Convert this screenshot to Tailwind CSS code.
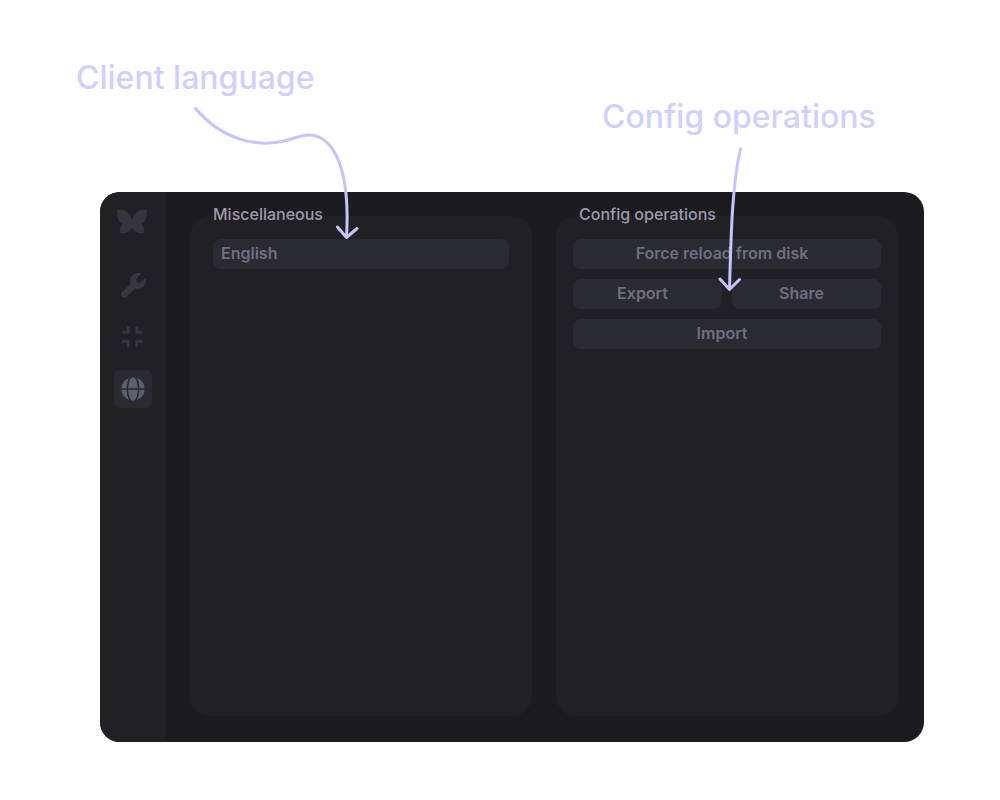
<!DOCTYPE html>
<html lang="en">
<head>
<meta charset="utf-8">
<meta name="viewport" content="width=device-width, initial-scale=1">
<title>Client settings</title>
<script src="https://cdn.jsdelivr.net/npm/@tailwindcss/browser@4"></script>
</head>
<body class="bg-white font-['Inter',sans-serif]">
<div class="relative flex min-h-screen flex-col pr-19 pb-[58px] pl-25">
  <header class="-ml-6 grid h-48 grid-cols-2 items-start gap-x-[204px] text-[32px] leading-10 font-medium text-[#d0d0ff]">
    <p class="pt-[58px] whitespace-nowrap">Client language</p>
    <p class="pt-[97px] whitespace-nowrap">Config operations</p>
  </header>

  <main class="flex flex-1 overflow-hidden rounded-[20px] bg-[#1c1b1f]">
    <nav aria-label="Sections" class="flex w-[66px] shrink-0 flex-col items-center bg-[#212025] pt-3">
      <svg class="h-9 w-9" viewBox="0 0 36 36" fill="#34353e" aria-label="Logo" role="img">
        <path d="M2.200 6C9 4.800 15.500 9 16.500 15.300H17.500C18.500 9 25 4.800 31.800 6C32.600 13 30.500 18 26.300 19.700C28.800 21.500 29.500 25.500 28.700 29C24 29.800 19.300 28.500 18.100 24.500H15.900C14.700 28.500 10 29.800 5.300 29C4.500 25.500 5.200 21.500 7.700 19.700C3.500 18 1.400 13 2.200 6Z"/>
      </svg>
      <div class="mt-[26px] flex flex-col gap-3.5">
        <button type="button" aria-label="Tools" class="flex h-[38px] w-[38px] items-center justify-center rounded-md">
          <svg class="h-[25px] w-[25px]" viewBox="0 0 512 512" fill="#363741"><path d="M352 320c88.400 0 160-71.600 160-160c0-15.300-2.200-30.100-6.200-44.200c-3.100-10.800-16.400-13.200-24.300-5.300l-76.800 76.800c-3 3-7.100 4.700-11.300 4.700H336c-8.800 0-16-7.200-16-16V118.600c0-4.200 1.700-8.300 4.700-11.300l76.800-76.800c7.900-7.900 5.400-21.200-5.300-24.300C382.100 2.200 367.300 0 352 0C263.600 0 192 71.600 192 160c0 19.100 3.400 37.500 9.500 54.500L19.900 396.100C7.200 408.800 0 426.100 0 444.100C0 481.600 30.400 512 67.900 512c18 0 35.300-7.200 48-19.900L297.500 310.500c17 6.200 35.400 9.500 54.500 9.500z"/></svg>
        </button>
        <button type="button" aria-label="Compact view" class="flex h-[38px] w-[38px] items-center justify-center rounded-md">
          <svg class="h-6 w-6" viewBox="0 0 24 24" fill="none" stroke="#34353e" stroke-width="3" stroke-linecap="round" stroke-linejoin="round"><path d="M2.500 7.300H7.300V2.500M20.500 7.300H15.700V2.500M2.500 16.200H7.300V21M20.500 16.200H15.700V21"/></svg>
        </button>
        <button type="button" aria-label="General" aria-current="page" class="flex h-[38px] w-[38px] items-center justify-center rounded-md bg-[#2a2a32]">
          <svg class="h-6 w-6" viewBox="0 0 512 512" fill="#5e5e6c"><path d="M8 239A249 249 0 0 1 174 22C141 76 123 154 121 239ZM154 239C157 106 203 4 256 4S355 106 358 239ZM504 239A249 249 0 0 0 338 22C371 76 389 154 391 239ZM8 274A249 249 0 0 0 174 490C141 436 123 358 121 274ZM154 274C157 406 203 508 256 508S355 406 358 274ZM504 274A249 249 0 0 1 338 490C371 436 389 358 391 274Z"/></svg>
        </button>
      </div>
    </nav>

    <div class="grid flex-1 grid-cols-2 gap-6 pt-6 pr-[26px] pb-[26px] pl-6">
      <section class="rounded-[20px] bg-[#212025] px-[23px]">
        <h2 class="-mt-3.5 text-base leading-6 font-medium text-[#9c9aab]"><label for="language">Miscellaneous</label></h2>
        <select id="language" class="mt-[13px] block h-[30px] w-full appearance-none rounded-lg bg-[#2a2a32] px-2 pb-0.5 text-base leading-6 font-semibold text-[#706f80]">
          <option>English</option>
        </select>
      </section>

      <section class="rounded-[20px] bg-[#212025] px-[17px]">
        <h2 class="-mt-3.5 pl-1.5 text-base leading-6 font-medium text-[#9c9aab]">Config operations</h2>
        <div class="mt-[13px] grid grid-cols-2 gap-2.5 text-base leading-6 font-semibold text-[#706f80]">
          <button type="button" class="col-span-2 h-[30px] rounded-lg bg-[#2a2a32] pr-2.5 pb-0.5">Force reload from disk</button>
          <button type="button" class="h-[30px] rounded-lg bg-[#2a2a32] pr-2.5 pb-0.5">Export</button>
          <button type="button" class="h-[30px] rounded-lg bg-[#2a2a32] pr-2.5 pb-0.5">Share</button>
          <button type="button" class="col-span-2 h-[30px] rounded-lg bg-[#2a2a32] pr-2.5 pb-0.5">Import</button>
        </div>
      </section>
    </div>
  </main>

  <!-- Callout arrows drawn over the window -->
  <svg class="pointer-events-none absolute top-0 left-0 h-[300px] w-[800px]" viewBox="0 0 800 300" fill="none" stroke="#c5c4fd" stroke-width="3" stroke-linecap="round" stroke-linejoin="round" aria-hidden="true">
    <path d="M195.500 108.500C217 134 253 153 296 137.500C329 125 351 160 346.500 237.500M337.500 227L346.500 237.500L357 228.500"/>
    <path d="M740.500 149C732 185 731 235 729.500 289.500M720 279L729.500 289.500L739.500 279.500"/>
  </svg>
</div>
</body>
</html>
